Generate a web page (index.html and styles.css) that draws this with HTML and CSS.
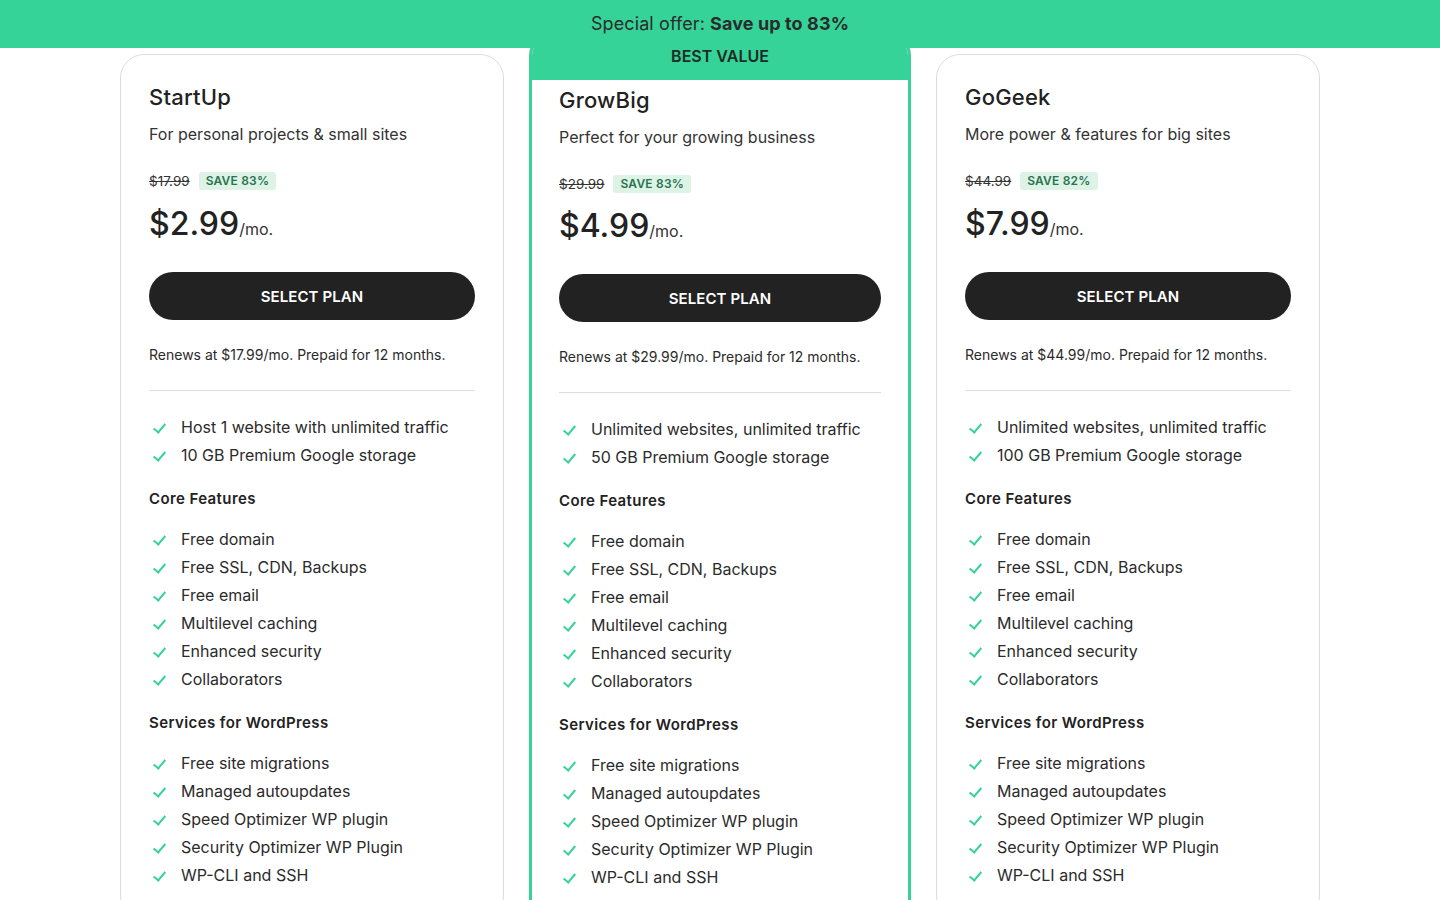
FILE: index.html
```html
<!DOCTYPE html>
<html lang="en">
<head>
<meta charset="utf-8">
<title>Plans</title>
<link rel="stylesheet" href="styles.css">
</head>
<body>
<div class="offer">Special offer: <strong>Save up to 83%</strong></div>
<main class="plans">
  <section class="card">
    <div class="card-body">
      <h2 class="plan-name">StartUp</h2>
      <p class="plan-desc">For personal projects &amp; small sites</p>
      <div class="old-row"><s class="old">$17.99</s><span class="save">SAVE 83%</span></div>
      <div class="price"><span class="amount">$2.99</span><span class="per">/mo.</span></div>
      <button class="select">SELECT PLAN</button>
      <p class="renew">Renews at $17.99/mo. Prepaid for 12 months.</p>
      <hr class="divider">
      <ul class="feats">
        <li>Host 1 website with unlimited traffic</li>
        <li>10 GB Premium Google storage</li>
      </ul>
      <h3 class="group">Core Features</h3>
      <ul class="feats">
        <li>Free domain</li>
        <li>Free SSL, CDN, Backups</li>
        <li>Free email</li>
        <li>Multilevel caching</li>
        <li>Enhanced security</li>
        <li>Collaborators</li>
      </ul>
      <h3 class="group">Services for WordPress</h3>
      <ul class="feats">
        <li>Free site migrations</li>
        <li>Managed autoupdates</li>
        <li>Speed Optimizer WP plugin</li>
        <li>Security Optimizer WP Plugin</li>
        <li>WP-CLI and SSH</li>
      </ul>
    </div>
  </section>
  <section class="card featured">
    <div class="ribbon">BEST VALUE</div>
    <div class="card-body">
      <h2 class="plan-name">GrowBig</h2>
      <p class="plan-desc">Perfect for your growing business</p>
      <div class="old-row"><s class="old">$29.99</s><span class="save">SAVE 83%</span></div>
      <div class="price"><span class="amount">$4.99</span><span class="per">/mo.</span></div>
      <button class="select">SELECT PLAN</button>
      <p class="renew">Renews at $29.99/mo. Prepaid for 12 months.</p>
      <hr class="divider">
      <ul class="feats">
        <li>Unlimited websites, unlimited traffic</li>
        <li>50 GB Premium Google storage</li>
      </ul>
      <h3 class="group">Core Features</h3>
      <ul class="feats">
        <li>Free domain</li>
        <li>Free SSL, CDN, Backups</li>
        <li>Free email</li>
        <li>Multilevel caching</li>
        <li>Enhanced security</li>
        <li>Collaborators</li>
      </ul>
      <h3 class="group">Services for WordPress</h3>
      <ul class="feats">
        <li>Free site migrations</li>
        <li>Managed autoupdates</li>
        <li>Speed Optimizer WP plugin</li>
        <li>Security Optimizer WP Plugin</li>
        <li>WP-CLI and SSH</li>
      </ul>
    </div>
  </section>
  <section class="card">
    <div class="card-body">
      <h2 class="plan-name">GoGeek</h2>
      <p class="plan-desc">More power &amp; features for big sites</p>
      <div class="old-row"><s class="old">$44.99</s><span class="save">SAVE 82%</span></div>
      <div class="price"><span class="amount">$7.99</span><span class="per">/mo.</span></div>
      <button class="select">SELECT PLAN</button>
      <p class="renew">Renews at $44.99/mo. Prepaid for 12 months.</p>
      <hr class="divider">
      <ul class="feats">
        <li>Unlimited websites, unlimited traffic</li>
        <li>100 GB Premium Google storage</li>
      </ul>
      <h3 class="group">Core Features</h3>
      <ul class="feats">
        <li>Free domain</li>
        <li>Free SSL, CDN, Backups</li>
        <li>Free email</li>
        <li>Multilevel caching</li>
        <li>Enhanced security</li>
        <li>Collaborators</li>
      </ul>
      <h3 class="group">Services for WordPress</h3>
      <ul class="feats">
        <li>Free site migrations</li>
        <li>Managed autoupdates</li>
        <li>Speed Optimizer WP plugin</li>
        <li>Security Optimizer WP Plugin</li>
        <li>WP-CLI and SSH</li>
      </ul>
    </div>
  </section>
</main>
</body>
</html>
```
FILE: styles.css
```css
* { box-sizing: border-box; }
html, body { margin: 0; padding: 0; }
body {
  font-family: Inter, "Noto Sans", "Liberation Sans", sans-serif;
  color: #2b2b2b;
  background: #fff;
  overflow: hidden;
}
.offer {
  position: relative;
  z-index: 2;
  height: 48px;
  background: #36d399;
  color: #2b2b2b;
  font-size: 18px;
  line-height: 48px;
  text-align: center;
  letter-spacing: 0.1px;
}
.offer strong { font-weight: 700; }

.plans {
  width: 1200px;
  margin: 6px auto 0;
  display: grid;
  grid-template-columns: 384px 382px 384px;
  column-gap: 25px;
  align-items: start;
}
.card {
  border: 1px solid #dddddd;
  border-radius: 24px;
  background: #fff;
  overflow: hidden;
}
.card-body { padding: 26px 28px 30px; }
.featured {
  margin-top: -22px;
  border: 3px solid #36d399;
}
.featured .card-body { padding: 4px 27px 30px; }
.featured .price { margin-top: 10px; }
.ribbon {
  background: #36d399;
  height: 45px;
  padding-top: 11px;
  text-align: center;
  font-size: 16px;
  line-height: 20px;
  font-weight: 600;
  color: #1f2b26;
}

.plan-name {
  margin: 0;
  font-size: 22px;
  line-height: 32px;
  font-weight: 500;
  color: #222;
  letter-spacing: 0.2px;
}
.plan-desc {
  margin: 9px 0 0;
  font-size: 16px;
  line-height: 24px;
  color: #333;
}
.old-row {
  margin-top: 23px;
  display: flex;
  align-items: center;
  gap: 9px;
  height: 24px;
}
.old {
  font-size: 13.5px;
  color: #333;
}
.save {
  background: #dcf3e6;
  color: #2a7250;
  font-size: 12px;
  font-weight: 600;
  line-height: 18px;
  padding: 0 7px;
  border-radius: 3px;
  letter-spacing: 0.2px;
}
.price {
  margin-top: 11px;
  display: flex;
  align-items: baseline;
  height: 40px;
}
.amount {
  font-size: 32px;
  font-weight: 500;
  color: #222;
  line-height: 40px;
}
.per {
  font-size: 16px;
  color: #333;
}
.select {
  display: block;
  width: 100%;
  height: 48px;
  margin-top: 28px;
  border: 0;
  border-radius: 24px;
  background: #222;
  color: #fff;
  font-family: inherit;
  font-size: 15px;
  font-weight: 600;
  letter-spacing: 0.1px;
  cursor: pointer;
}
.renew {
  margin: 25px 0 0;
  font-size: 14px;
  line-height: 20px;
  color: #2b2b2b;
}
.divider {
  margin: 25px 0 0;
  border: 0;
  border-top: 1px solid #dcdcdc;
}
.feats {
  list-style: none;
  margin: 22px 0 0;
  padding: 0;
}
.feats li {
  position: relative;
  padding-left: 32px;
  font-size: 16px;
  line-height: 28px;
  color: #2b2b2b;
}
.feats li::before {
  content: "";
  position: absolute;
  left: 7px;
  top: 8px;
  width: 5px;
  height: 10px;
  border-right: 2px solid #36d399;
  border-bottom: 2px solid #36d399;
  transform: rotate(40deg);
}
.group {
  margin: 19px 0 0;
  font-size: 15px;
  line-height: 22px;
  font-weight: 600;
  color: #222;
  letter-spacing: 0.4px;
}
.group + .feats { margin-top: 15px; }
```
